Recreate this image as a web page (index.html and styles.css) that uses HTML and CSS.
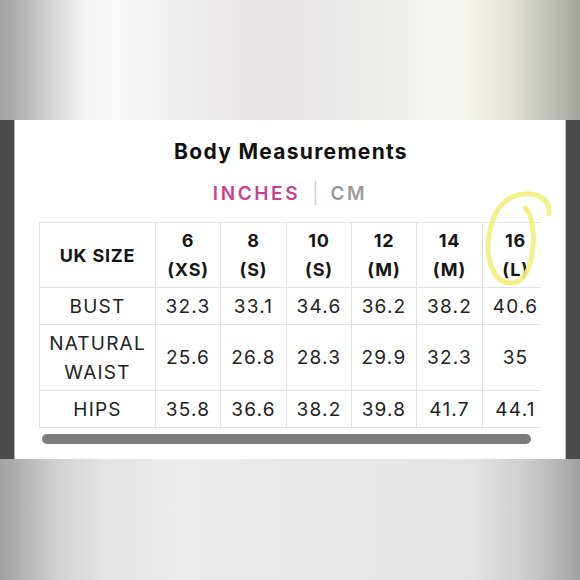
FILE: index.html
```
<!DOCTYPE html>
<html lang="en">
<head>
<meta charset="utf-8">
<title>Body Measurements</title>
<link rel="stylesheet" href="styles.css">
</head>
<body>
<div class="page">
  <div class="band band-top"></div>
  <div class="middle">
    <div class="side side-left"></div>
    <main class="panel">
      <h1 class="title">Body Measurements</h1>
      <div class="units"><span class="unit active">INCHES</span><span class="sep">|</span><span class="unit">CM</span></div>
      <div class="scroller">
        <table class="sizes">
          <colgroup>
            <col class="c-label"><col class="c65"><col class="c66"><col class="c65"><col class="c65"><col class="c66"><col class="c66">
          </colgroup>
          <thead>
            <tr class="head">
              <th>UK SIZE</th>
              <th>6<br>(XS)</th>
              <th>8<br>(S)</th>
              <th>10<br>(S)</th>
              <th>12<br>(M)</th>
              <th>14<br>(M)</th>
              <th>16<br>(L)</th>
            </tr>
          </thead>
          <tbody>
            <tr class="short">
              <td>BUST</td><td>32.3</td><td>33.1</td><td>34.6</td><td>36.2</td><td>38.2</td><td>40.6</td>
            </tr>
            <tr class="tall">
              <td>NATURAL<br>WAIST</td><td>25.6</td><td>26.8</td><td>28.3</td><td>29.9</td><td>32.3</td><td>35</td>
            </tr>
            <tr class="short">
              <td>HIPS</td><td>35.8</td><td>36.6</td><td>38.2</td><td>39.8</td><td>41.7</td><td>44.1</td>
            </tr>
          </tbody>
        </table>
      </div>
      <div class="scrollbar"></div>
    </main>
    <div class="side side-right"></div>
  </div>
  <div class="band band-bottom"></div>
  <svg class="scribble" width="580" height="580" viewBox="0 0 580 580" aria-hidden="true">
    <path d="M549 214 C550 205 546 199 539 196 C531 193 521 193 512 197 C500 203 494 214 491 226 C487 240 487 256 492 268 C496 278 503 283 511 283 C520 283 527 275 530 263 C534 249 534 234 532 224 C531 217 529 212 525 208" fill="none" stroke="#f1ef7c" stroke-opacity="0.9" stroke-width="5" stroke-linecap="round"/>
  </svg>
</div>
</body>
</html>
```

FILE: styles.css
```
* { box-sizing: border-box; }

html, body {
  margin: 0;
  padding: 0;
  width: 580px;
  height: 580px;
  overflow: hidden;
  background: #e6e6e6;
}

.page {
  position: relative;
  width: 580px;
  height: 580px;
  display: flex;
  flex-direction: column;
  font-family: Inter, "Liberation Sans", sans-serif;
  color: #1c1c1c;
}

.band { flex: none; }

.band-top {
  height: 120px;
  background: linear-gradient(to right,
    #a4a4a4 0%, #b4b4b4 4%, #d6d6d6 9%, #f4f4f4 15%, #f8f8f8 20%,
    #eeeeee 30%, #e8e6e7 40%, #e6e2e4 46%, #e8e7e7 56%, #ebebea 66%,
    #f4f5f2 75%, #f6f6f0 80%, #e2e2da 88%, #c4c5be 94%, #a2a49e 100%);
}

.band-bottom {
  height: 121px;
  background: linear-gradient(to right,
    #a2a2a2 0%, #b4b4b4 4%, #d2d2d2 10%, #e2e3e2 18%, #e9eae9 30%,
    #e7e7e7 50%, #e6e6e6 70%, #e2e2e2 82%, #cfcfcf 90%, #b6b6b6 96%, #a0a0a0 100%);
}

.middle {
  flex: none;
  height: 339px;
  display: flex;
}

.side {
  flex: none;
  background: #4a4a4a;
}

.side-left {
  width: 15px;
  border-right: 1px solid #b4b4b4;
}

.side-right {
  width: 15px;
  border-left: 1px solid #c4c4c4;
}

.panel {
  flex: 1;
  background: #ffffff;
  padding: 20px 0 0 24px;
  display: flex;
  flex-direction: column;
}

.title {
  margin: 0;
  font-size: 21px;
  line-height: 24px;
  font-weight: 700;
  letter-spacing: 1.3px;
  text-align: center;
  color: #111111;
  padding-right: 24px;
  padding-left: 2px;
}

.units {
  margin-top: 16px;
  height: 26px;
  display: flex;
  justify-content: center;
  align-items: center;
  gap: 12px;
  padding-right: 24px;
  padding-left: 0;
  font-size: 19px;
  font-weight: 600;
  letter-spacing: 2.6px;
}

.unit { color: #9a9a9a; }
.unit.active { color: #c8438c; }

.sep {
  color: #c6c6c6;
  font-weight: 300;
  font-size: 20px;
  letter-spacing: 0;
}

.scroller {
  margin-top: 16px;
  width: 502px;
  overflow: hidden;
}

.sizes {
  border-collapse: collapse;
  table-layout: fixed;
  width: 510px;
  text-align: center;
}

.c-label { width: 116px; }
.c65 { width: 65px; }
.c66 { width: 66px; }

.sizes th,
.sizes td {
  border: 1.5px solid #e2e2e2;
  padding: 0;
  vertical-align: middle;
}

.sizes th {
  font-size: 18px;
  line-height: 29px;
  font-weight: 700;
  letter-spacing: 0.8px;
  color: #161616;
}

.sizes td {
  font-size: 19px;
  line-height: 29px;
  font-weight: 400;
  letter-spacing: 1.2px;
  color: #222222;
}

.head { height: 65px; }
.short { height: 37px; }
.tall { height: 66px; }

.scrollbar {
  margin: 6px 0 0 3px;
  width: 489px;
  height: 10px;
  border-radius: 5px;
  background: #7c7c7c;
}

.scribble {
  position: absolute;
  left: 0;
  top: 0;
  pointer-events: none;
}
```
